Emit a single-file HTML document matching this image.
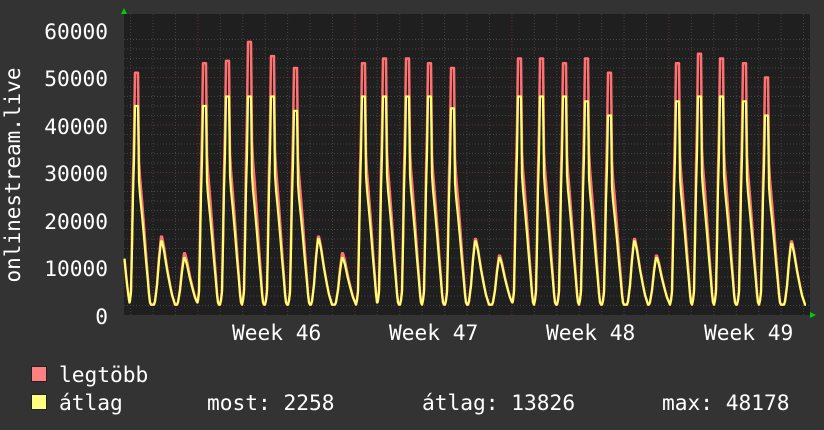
<!DOCTYPE html>
<html><head><meta charset="utf-8"><style>
html,body{margin:0;padding:0;background:#333;}
body{width:824px;height:430px;position:relative;overflow:hidden;font-family:"DejaVu Sans Mono","Liberation Mono",monospace;color:#fff;}
.t{position:absolute;font-size:21.2px;line-height:1;white-space:pre;}
.sq{position:absolute;width:14px;height:14px;border:1px solid #222;}
</style></head><body>
<svg width="824" height="430" style="position:absolute;left:0;top:0">
<rect x="124" y="14" width="686" height="301" fill="#1f1f1f"/>
<g id="grid"></g>
<g id="data"></g>
<polygon points="121,14 127,14 124,8" fill="#0c0"/>
<polygon points="810,312 810,318 816,315" fill="#0c0"/>
<text x="20" y="175" fill="#fff" font-size="21" font-family="DejaVu Sans Mono, monospace" transform="rotate(-90 20 175)" text-anchor="middle">onlinestream.live</text>
</svg>
<div class="t" style="right:716px;top:21px">60000</div>
<div class="t" style="right:716px;top:68px">50000</div>
<div class="t" style="right:716px;top:116px">40000</div>
<div class="t" style="right:716px;top:163px">30000</div>
<div class="t" style="right:716px;top:211px">20000</div>
<div class="t" style="right:716px;top:258px">10000</div>
<div class="t" style="right:716px;top:306px">0</div>
<div class="t" style="left:232px;top:322px">Week 46</div>
<div class="t" style="left:389px;top:322px">Week 47</div>
<div class="t" style="left:546px;top:322px">Week 48</div>
<div class="t" style="left:704px;top:322px">Week 49</div>
<div class="sq" style="left:31px;top:366px;background:#ff8080"></div>
<div class="sq" style="left:31px;top:394px;background:#ffff80"></div>
<div class="t" style="left:59px;top:364px">legtöbb</div>
<div class="t" style="left:59px;top:392px">átlag</div>
<div class="t" style="left:207px;top:392px">most: 2258</div>
<div class="t" style="left:422px;top:392px">átlag: 13826</div>
<div class="t" style="left:662px;top:392px">max: 48178</div>
<script>
function Y(v){return 315-v*285/60000;}
var g=document.getElementById('grid'),s='';
for(var v=2000;v<60000;v+=2000){var y=Y(v);var maj=v%10000==0;
s+='<line x1="124" x2="810" y1="'+y+'" y2="'+y+'" stroke="'+(maj?'#6a2a2a':'#444')+'" stroke-dasharray="1,2"/>';}
for(var x=130.6;x<810;x+=22.43){var k=Math.round((x-130.6)/22.43);var maj=(k%7==3);
s+='<line y1="14" y2="315" x1="'+x+'" x2="'+x+'" stroke="'+(maj?'#6a2a2a':'#444')+'" stroke-dasharray="1,2"/>';}
g.innerHTML=s;
var pk=[[137,51000,44000],[162,16500,15500],[185,13000,12000],[205,53000,44000],[228,53500,46000],[250,57500,46000],[273,54500,46000],[296,52000,43000],[319,16500,16000],[343,13000,12000],[364,53000,46000],[385,54000,46000],[408,54000,46000],[430,53000,46000],[453,52000,43500],[476,16000,15500],[500,12500,12000],[520,54000,46000],[542,54000,46000],[565,53000,46000],[587,54000,45000],[610,51000,42000],[635,16000,15500],[657,12500,12000],[678,53000,45000],[700,55000,46000],[722,54000,46000],[745,53000,45000],[767,50000,42000],[792,15500,15000]];
var TR=2200;
var bigT=[[-8,0],[-7,0.02],[-6,0.06],[-5,0.28],[-4,0.55],[-3,0.72],[-2,1],[1,1],[2,0.62],[3,0.55],[5,0.45],[7,0.34],[9,0.22],[11,0.11],[12,0.05],[13,0.01],[14,0]];
var smT=[[-8,0],[-7,0.05],[-5,0.3],[-3,0.7],[-1,1],[0,1],[2,0.85],[5,0.55],[8,0.3],[10,0.15],[12,0.05],[13,0]];
function interp(tab,d){if(d<=tab[0][0]||d>=tab[tab.length-1][0])return 0;
for(var i=0;i<tab.length-1;i++){var a=tab[i],b=tab[i+1];if(d>=a[0]&&d<=b[0]){return a[1]+(b[1]-a[1])*(d-a[0])/(b[0]-a[0]);}}return 0;}
function val(x,idx){
 if(x<130){return TR+(13000-TR)*Math.pow((130-x)/6,1.3);}
 var best=TR;
 for(var i=0;i<pk.length;i++){var p=pk[i],P=p[idx],big=p[1]>30000;var d=x-p[0];
  var f=interp(big?bigT:smT,d);var v=TR+(P-TR)*f;if(f>0&&v>best)best=v;}
 return best;}
var dg=document.getElementById('data'),out='';
[[1,'#ff7070',2.5],[2,'#ffff70',2.2]].forEach(function(c){var pts=[];for(var x=124.5;x<=806;x+=0.5){pts.push(x+','+Y(val(x,c[0])).toFixed(1));}
out+='<polyline fill="none" stroke="'+c[1]+'" stroke-width="'+c[2]+'" stroke-linejoin="round" points="'+pts.join(' ')+'"/>';});
dg.innerHTML=out;
</script>
</body></html>
